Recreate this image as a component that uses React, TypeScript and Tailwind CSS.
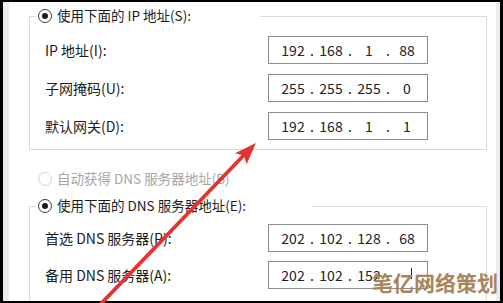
import React from 'react';

const cjk = "font-['Noto_Sans_CJK_SC','Noto_Sans',sans-serif]";

function Radio({ checked, disabled }: { checked?: boolean; disabled?: boolean }) {
  return (
    <span
      className={
        disabled
          ? 'flex h-[14px] w-[14px] shrink-0 items-center justify-center rounded-full border border-[#d2d2d2] bg-white'
          : 'flex h-[14px] w-[14px] shrink-0 items-center justify-center rounded-full border border-[#3a3a3a] bg-white'
      }
    >
      {checked && <span className="h-[6px] w-[6px] rounded-full bg-[#1a1a1a]" />}
    </span>
  );
}

function IpBox({ parts }: { parts: string[] }) {
  return (
    <div className="flex h-[28px] w-[160px] items-center border border-[#8c8c8c] bg-white pl-[11px] text-[14px] leading-none text-[#222]">
      {parts.map((p, i) => (
        <React.Fragment key={i}>
          {i > 0 && <span className="w-[12px] text-center">.</span>}
          <span className="w-[26px] text-center">{p}</span>
        </React.Fragment>
      ))}
    </div>
  );
}

function Row({ label, parts }: { label: string; parts: string[] }) {
  return (
    <div className="flex h-[28px] items-center">
      <span className="w-[223px] text-[14px] leading-none text-[#1c1c1c]">{label}</span>
      <IpBox parts={parts} />
    </div>
  );
}

function Legend({ text, width }: { text: string; width: string }) {
  return (
    <legend className={`ml-[6px] ${width}`}>
      <div className="flex h-[20px] items-center gap-[5px] pl-[2px] text-[13.5px] leading-none text-[#1c1c1c]">
        <Radio checked />
        <span>{text}</span>
      </div>
    </legend>
  );
}

export default function App() {
  return (
    <div className={`relative h-[303px] w-[503px] overflow-hidden bg-black pb-[2px] pl-[3px] pr-[3px] pt-[2px] ${cjk}`}>
      <div className="flex h-full flex-col overflow-hidden border-l-[6px] border-r-[4px] border-[#ececec] bg-white">
        <fieldset className="ml-[20px] mt-[4px] w-[458px] border border-[#dadada] pb-[9px]">
          <Legend text="使用下面的 IP 地址(S):" width="w-[224px]" />
          <div className="flex flex-col gap-[10px] pl-[15px] pt-[10px]">
            <Row label="IP 地址(I):" parts={['192', '168', '1', '88']} />
            <Row label="子网掩码(U):" parts={['255', '255', '255', '0']} />
            <Row label="默认网关(D):" parts={['192', '168', '1', '1']} />
          </div>
        </fieldset>

        <div className="ml-[29px] mt-[22px] flex h-[20px] items-center gap-[5px] text-[13.5px] leading-none text-[#a6a6a6]">
          <Radio disabled />
          <span>自动获得 DNS 服务器地址(B)</span>
        </div>

        <fieldset className="ml-[20px] mt-[10px] w-[458px] shrink-0 border border-[#dadada] pb-[14px]">
          <Legend text="使用下面的 DNS 服务器地址(E):" width="w-[276px]" />
          <div className="flex flex-col gap-[9px] pl-[15px] pt-[8px]">
            <Row label="首选 DNS 服务器(P):" parts={['202', '102', '128', '68']} />
            <Row label="备用 DNS 服务器(A):" parts={['202', '102', '152', '']} />
          </div>
        </fieldset>
      </div>

      <div className="absolute left-[411px] top-[268px] h-[11px] w-px bg-[#222]" />
      <div className="absolute left-[372px] top-[272px] text-[21px] font-bold leading-none text-[#a8855a]">
        笔亿网络策划
      </div>

      <svg className="pointer-events-none absolute left-0 top-0" width="503" height="303" viewBox="0 0 503 303">
        <line x1="95" y1="310" x2="245" y2="154" stroke="#e3342f" strokeWidth="3.8" />
        <polygon points="256,143 235,153.3 244,155.5 246.6,164.3" fill="#e3342f" />
      </svg>
    </div>
  );
}
